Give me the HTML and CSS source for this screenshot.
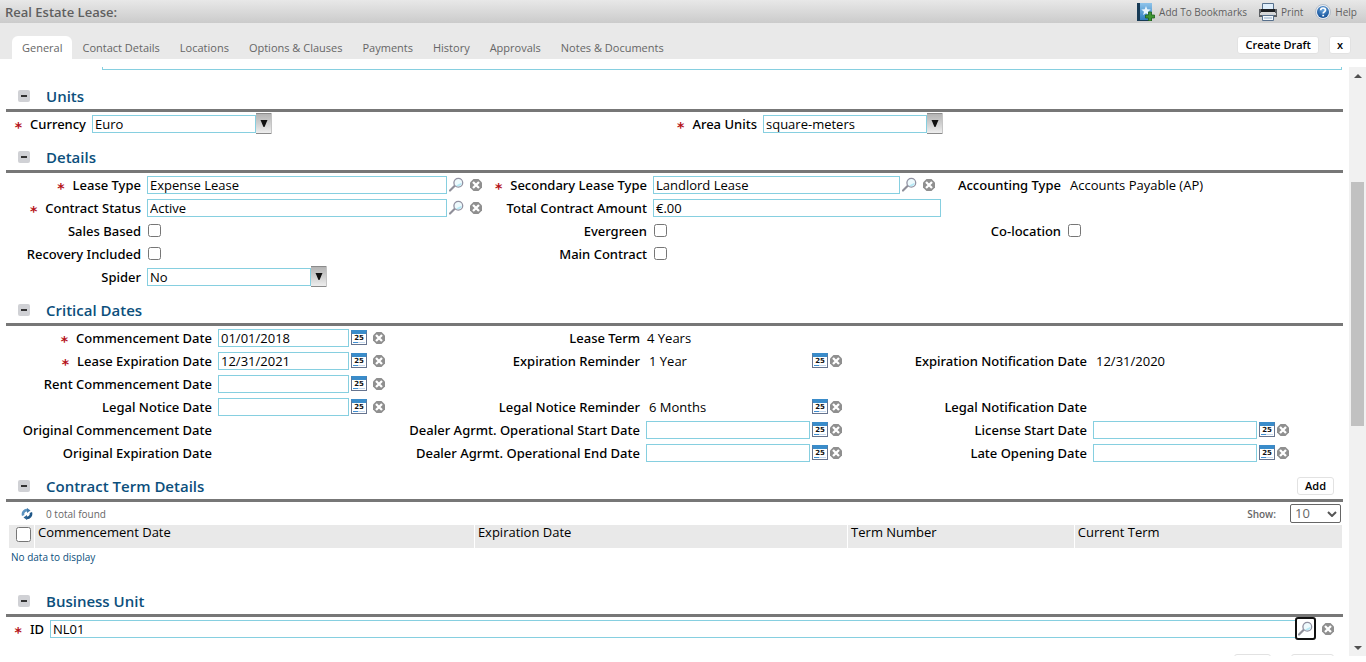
FILE: index.html
```html
<!DOCTYPE html>
<html lang="en">
<head>
<meta charset="utf-8">
<title>Real Estate Lease</title>
<link rel="stylesheet" href="styles.css">
</head>
<body>
<svg class="sprite" aria-hidden="true">
  <defs>
    <linearGradient id="g-blue" x1="0" y1="0" x2="0" y2="1"><stop offset="0" stop-color="#8fc4ea"/><stop offset="1" stop-color="#2f7fc0"/></linearGradient>
    <linearGradient id="g-arrow" x1="0" y1="0" x2="0" y2="1"><stop offset="0" stop-color="#b4b4b4"/><stop offset=".5" stop-color="#cfcfcf"/><stop offset="1" stop-color="#eeeeee"/></linearGradient>
    <radialGradient id="g-help" cx=".5" cy=".3" r=".7"><stop offset="0" stop-color="#6aa7e0"/><stop offset="1" stop-color="#0d4a94"/></radialGradient>
  </defs>
  <symbol id="i-clear" viewBox="0 0 12 12">
    <path d="M3.500 0h5L12 3.500v5L8.500 12h-5L0 8.500v-5z" fill="#8f8f8f"/>
    <path d="M3 3l6 6M9 3L3 9" stroke="#fff" stroke-width="2.300"/>
  </symbol>
  <symbol id="i-search" viewBox="0 0 15 15">
    <path d="M1 13.500l4.500-4.500" stroke="#8f8f99" stroke-width="2.200" stroke-linecap="round"/>
    <circle cx="9.300" cy="5.700" r="4.400" fill="#eefafd" stroke="#9292a2" stroke-width="1.300"/>
    <path d="M7 8.400a3.400 3.400 0 0 0 5.600-2.700" fill="#b5e8f5"/>
  </symbol>
  <symbol id="i-arrow" viewBox="0 0 16 21">
    <path d="M0 0h15.500v21H0z" fill="#8b8b8b"/>
    <path d="M0 1h15v19H0z" fill="url(#g-arrow)"/>
    <path d="M4.500 7h7l-3 7h-1z" fill="#111"/>
  </symbol>
</svg>

<header class="titlebar">
  <h1 class="titlebar-name">Real Estate Lease:</h1>
  <nav class="tools" aria-label="Page tools">
    <a class="tool" href="#bookmarks">
      <svg class="icon-tool" viewBox="0 0 18 18" aria-hidden="true"><path d="M0 0h15v18H0z" fill="#173a55"/><path d="M3 0h12v17H3z" fill="url(#g-blue)"/><path d="M9 3l1.300 3.300 3.400.2-2.700 2.200.9 3.400L9 10.200l-2.900 1.900.9-3.400-2.700-2.200 3.400-.2z" fill="#e9f5fd"/><path d="M11.500 9h3v3h3v3h-3v3h-3v-3h-3v-3h3z" fill="#3f9633" stroke="#1e5f1c" stroke-width=".8"/></svg>
      Add To Bookmarks</a>
    <a class="tool" href="#print">
      <svg class="icon-tool" viewBox="0 0 18 18" aria-hidden="true"><path d="M3.500.5h11v7h-11z" fill="#dfeefb" stroke="#57708c"/><path d="M0 6h2v4h14V6h2v8H0z" fill="#5d6064"/><path d="M2 6h14v3H2z" fill="#1d1f22"/><path d="M1 10h16v2H1z" fill="#d4d6d8"/><path d="M3.500 12.500h11v5h-11z" fill="#f4f8fc" stroke="#57708c"/><path d="M5 15h8" stroke="#8ca7c4"/></svg>
      Print</a>
    <a class="tool" href="#help">
      <svg class="icon-help" viewBox="0 0 16 16" aria-hidden="true"><circle cx="8" cy="8" r="7.500" fill="#e8edf3" stroke="#a9b4c2" stroke-width=".8"/><circle cx="8" cy="8" r="6" fill="url(#g-help)"/><path d="M5.700 6.300c0-3 4.800-3 4.800-.2 0 1.800-2.300 1.700-2.300 3.400" stroke="#fff" stroke-width="1.700" fill="none"/><path d="M7.300 10.800h1.800v1.600H7.300z" fill="#fff"/></svg>
      Help</a>
  </nav>
</header>

<div class="tabbar">
  <nav class="tabs" aria-label="Sections">
    <a class="tab tab-active" href="#general" aria-current="page">General</a>
    <a class="tab" href="#contact">Contact Details</a>
    <a class="tab" href="#locations">Locations</a>
    <a class="tab" href="#options">Options &amp; Clauses</a>
    <a class="tab" href="#payments">Payments</a>
    <a class="tab" href="#history">History</a>
    <a class="tab" href="#approvals">Approvals</a>
    <a class="tab" href="#notes">Notes &amp; Documents</a>
  </nav>
  <div class="actions">
    <button class="btn" type="button">Create Draft</button>
    <button class="btn" type="button" aria-label="Close">x</button>
  </div>
</div>

<div class="workspace">
<main class="pane">
  <div class="box-end"></div>

  <section>
    <header class="section-head">
      <button class="toggle" type="button" aria-label="Collapse Units"></button>
      <h2 class="section-title">Units</h2>
    </header>
    <div class="grid grid-units">
      <label class="label required" for="currency">Currency</label>
      <div class="field"><span class="combo"><select class="combo-select" id="currency"><option>Euro</option></select><svg class="combo-arrow" aria-hidden="true"><use href="#i-arrow"/></svg></span></div>
      <label class="label required" for="area">Area Units</label>
      <div class="field"><span class="combo"><select class="combo-select" id="area"><option>square-meters</option></select><svg class="combo-arrow" aria-hidden="true"><use href="#i-arrow"/></svg></span></div>
    </div>
  </section>

  <section>
    <header class="section-head">
      <button class="toggle" type="button" aria-label="Collapse Details"></button>
      <h2 class="section-title">Details</h2>
    </header>
    <div class="grid grid-details">
      <label class="label required" for="lease-type">Lease Type</label>
      <div class="field field-lookup"><input class="text" id="lease-type" value="Expense Lease"><button class="icon-btn" type="button" aria-label="Find"><svg class="icon-search"><use href="#i-search"/></svg></button><button class="icon-btn" type="button" aria-label="Clear"><svg class="icon-clear"><use href="#i-clear"/></svg></button></div>
      <label class="label required" for="second-type">Secondary Lease Type</label>
      <div class="field field-lookup"><input class="text" id="second-type" value="Landlord Lease"><button class="icon-btn" type="button" aria-label="Find"><svg class="icon-search"><use href="#i-search"/></svg></button><button class="icon-btn" type="button" aria-label="Clear"><svg class="icon-clear"><use href="#i-clear"/></svg></button></div>
      <span class="label">Accounting Type</span>
      <span class="value">Accounts Payable (AP)</span>

      <label class="label required" for="status">Contract Status</label>
      <div class="field field-lookup"><input class="text" id="status" value="Active"><button class="icon-btn" type="button" aria-label="Find"><svg class="icon-search"><use href="#i-search"/></svg></button><button class="icon-btn" type="button" aria-label="Clear"><svg class="icon-clear"><use href="#i-clear"/></svg></button></div>
      <label class="label" for="amount">Total Contract Amount</label>
      <div class="field"><input class="text" id="amount" value="€.00"></div>

      <label class="label new-row" for="sales">Sales Based</label>
      <div class="field"><input class="check" type="checkbox" id="sales"></div>
      <label class="label" for="evergreen">Evergreen</label>
      <div class="field"><input class="check" type="checkbox" id="evergreen"></div>
      <label class="label" for="coloc">Co-location</label>
      <div class="field"><input class="check" type="checkbox" id="coloc"></div>

      <label class="label" for="recovery">Recovery Included</label>
      <div class="field"><input class="check" type="checkbox" id="recovery"></div>
      <label class="label" for="main-contract">Main Contract</label>
      <div class="field"><input class="check" type="checkbox" id="main-contract"></div>

      <label class="label new-row" for="spider">Spider</label>
      <div class="field"><span class="combo"><select class="combo-select" id="spider"><option>No</option></select><svg class="combo-arrow" aria-hidden="true"><use href="#i-arrow"/></svg></span></div>
    </div>
  </section>

  <section>
    <header class="section-head">
      <button class="toggle" type="button" aria-label="Collapse Critical Dates"></button>
      <h2 class="section-title">Critical Dates</h2>
    </header>
    <div class="grid grid-dates">
      <label class="label required" for="commence">Commencement Date</label>
      <div class="field field-wide"><input class="text" id="commence" value="01/01/2018"><button class="cal" type="button" aria-label="Pick date">25</button><button class="icon-btn" type="button" aria-label="Clear"><svg class="icon-clear"><use href="#i-clear"/></svg></button></div>
      <span class="label">Lease Term</span>
      <span class="value value-tight">4 Years</span>

      <label class="label required new-row" for="expire">Lease Expiration Date</label>
      <div class="field field-wide"><input class="text" id="expire" value="12/31/2021"><button class="cal" type="button" aria-label="Pick date">25</button><button class="icon-btn" type="button" aria-label="Clear"><svg class="icon-clear"><use href="#i-clear"/></svg></button></div>
      <span class="label">Expiration Reminder</span>
      <div class="field"><span class="value value-fill">1 Year</span><button class="cal" type="button" aria-label="Pick date">25</button><button class="icon-btn" type="button" aria-label="Clear"><svg class="icon-clear"><use href="#i-clear"/></svg></button></div>
      <span class="label">Expiration Notification Date</span>
      <span class="value">12/31/2020</span>

      <label class="label" for="rent">Rent Commencement Date</label>
      <div class="field field-wide"><input class="text" id="rent"><button class="cal" type="button" aria-label="Pick date">25</button><button class="icon-btn" type="button" aria-label="Clear"><svg class="icon-clear"><use href="#i-clear"/></svg></button></div>

      <label class="label new-row" for="notice">Legal Notice Date</label>
      <div class="field field-wide"><input class="text" id="notice"><button class="cal" type="button" aria-label="Pick date">25</button><button class="icon-btn" type="button" aria-label="Clear"><svg class="icon-clear"><use href="#i-clear"/></svg></button></div>
      <span class="label">Legal Notice Reminder</span>
      <div class="field"><span class="value value-fill">6 Months</span><button class="cal" type="button" aria-label="Pick date">25</button><button class="icon-btn" type="button" aria-label="Clear"><svg class="icon-clear"><use href="#i-clear"/></svg></button></div>
      <span class="label">Legal Notification Date</span>

      <span class="label new-row">Original Commencement Date</span>
      <span class="value"></span>
      <label class="label" for="op-start">Dealer Agrmt. Operational Start Date</label>
      <div class="field"><input class="text" id="op-start"><button class="cal" type="button" aria-label="Pick date">25</button><button class="icon-btn" type="button" aria-label="Clear"><svg class="icon-clear"><use href="#i-clear"/></svg></button></div>
      <label class="label" for="license">License Start Date</label>
      <div class="field"><input class="text" id="license"><button class="cal" type="button" aria-label="Pick date">25</button><button class="icon-btn" type="button" aria-label="Clear"><svg class="icon-clear"><use href="#i-clear"/></svg></button></div>

      <span class="label new-row">Original Expiration Date</span>
      <span class="value"></span>
      <label class="label" for="op-end">Dealer Agrmt. Operational End Date</label>
      <div class="field"><input class="text" id="op-end"><button class="cal" type="button" aria-label="Pick date">25</button><button class="icon-btn" type="button" aria-label="Clear"><svg class="icon-clear"><use href="#i-clear"/></svg></button></div>
      <label class="label" for="late">Late Opening Date</label>
      <div class="field"><input class="text" id="late"><button class="cal" type="button" aria-label="Pick date">25</button><button class="icon-btn" type="button" aria-label="Clear"><svg class="icon-clear"><use href="#i-clear"/></svg></button></div>
    </div>
  </section>

  <section class="terms">
    <header class="section-head">
      <button class="toggle" type="button" aria-label="Collapse Contract Term Details"></button>
      <h2 class="section-title">Contract Term Details</h2>
      <button class="btn" type="button">Add</button>
    </header>
    <div class="list-bar">
      <button class="icon-btn" type="button" aria-label="Refresh"><svg class="icon-refresh" viewBox="0 0 12 12"><path d="M2.200 7.500A4 4 0 0 1 6.500 2.200" fill="none" stroke="#5b93c0" stroke-width="2.600"/><path d="M6 0l3.500 2.500L6 5z" fill="#3f78a8"/><path d="M9.800 4.500A4 4 0 0 1 5.500 9.800" fill="none" stroke="#1f5788" stroke-width="2.600"/><path d="M6 7v5L2.500 9.500z" fill="#2c6596"/></svg></button>
      <span class="count">0 total found</span>
      <label class="show" for="page-size">Show:</label>
      <span class="pager"><select class="pager-select" id="page-size"><option>10</option></select><svg class="pager-arrow" viewBox="0 0 10 6" aria-hidden="true"><path d="M1 1l4 4 4-4" fill="none" stroke="#555" stroke-width="2"/></svg></span>
    </div>
    <table class="table">
      <thead>
        <tr>
          <th class="col-check"><input class="check check-all" type="checkbox" aria-label="Select all"></th>
          <th class="col-start">Commencement Date</th>
          <th class="col-end">Expiration Date</th>
          <th class="col-number">Term Number</th>
          <th>Current Term</th>
        </tr>
      </thead>
      <tbody><tr><td colspan="5">No data to display</td></tr></tbody>
    </table>
  </section>

  <section>
    <header class="section-head">
      <button class="toggle" type="button" aria-label="Collapse Business Unit"></button>
      <h2 class="section-title">Business Unit</h2>
    </header>
    <div class="grid grid-unit">
      <label class="label required" for="unit-id">ID</label>
      <div class="field"><input class="text" id="unit-id" value="NL01"><button class="icon-btn icon-focus" type="button" aria-label="Find"><svg class="icon-search"><use href="#i-search"/></svg></button><button class="icon-btn" type="button" aria-label="Clear"><svg class="icon-clear"><use href="#i-clear"/></svg></button></div>
    </div>
    <div class="unit-actions">
      <button class="btn btn-short" type="button" aria-label="Find"></button>
      <button class="btn btn-long" type="button" aria-label="Remove"></button>
    </div>
  </section>
</main>
<div class="scroll" aria-hidden="true">
  <svg class="scroll-arrow" viewBox="0 0 17 17"><path d="M5 11h8L9 7z" fill="#505050"/></svg>
  <div class="scroll-track"><div class="scroll-thumb"></div></div>
  <svg class="scroll-arrow" viewBox="0 0 17 17"><path d="M5 7h8l-4 4z" fill="#505050"/></svg>
</div>
</div>
</body>
</html>
```
FILE: styles.css
```css
* { box-sizing: border-box; }
body {
  margin: 0;
  height: 100vh;
  display: flex;
  flex-direction: column;
  overflow: hidden;
  background: #fff;
  color: #000;
  font: 13px/16px "Trebuchet MS", "Open Sans", "Noto Sans", sans-serif;
}
button, input, select { font: inherit; color: inherit; margin: 0; }
a { color: inherit; text-decoration: none; }
.sprite { position: absolute; width: 0; height: 0; }

.titlebar {
  display: flex;
  justify-content: space-between;
  align-items: center;
  flex: none;
  height: 23px;
  padding: 0 9px 0 5px;
  background: linear-gradient(#e8e8e8, #cbcbcb);
  color: #5f5f5f;
}
.titlebar-name { margin: 0; font-size: 13px; font-weight: 600; }
.tools { display: flex; gap: 12px; }
.tool { display: flex; align-items: center; gap: 4px; font-size: 10px; }
.icon-tool { width: 18px; height: 18px; }
.icon-help { width: 16px; height: 16px; }

.tabbar {
  display: flex;
  justify-content: space-between;
  align-items: flex-end;
  flex: none;
  height: 36px;
  padding: 0 15px 0 12px;
  background: #e9e9e9;
}
.tabs { display: flex; color: #666; font-size: 11px; }
.tab { padding: 4px 10px 3px; border-radius: 6px 6px 0 0; }
.tab-active { background: #fff; }
.actions { display: flex; gap: 10px; padding-bottom: 5px; }
.btn {
  height: 18px;
  padding: 0 7px;
  border: 1px solid #e2e2e2;
  border-radius: 3px;
  background: #fff;
  font-size: 11px;
  font-weight: 600;
  line-height: 16px;
}
.btn-short { width: 37px; }
.btn-long { width: 43px; }

.workspace { display: flex; flex: 1; min-height: 0; padding: 8px 0 6px; }
.pane { flex: 1; min-width: 0; overflow: hidden; padding: 0 6px; }
.box-end { height: 3px; margin: 0 1px 13px 96px; border: 1px solid #86cfe0; border-top: 0; }
.section-head {
  display: flex;
  align-items: center;
  height: 29px;
  padding: 0 9px 0 12px;
  border-bottom: 3px solid #777;
}
.section-title { flex: 1; margin: 0 0 0 16px; color: #0c4f7c; font-size: 15px; font-weight: 600; line-height: 20px; }
.toggle { width: 12px; height: 12px; padding: 0; border: 0; border-radius: 2px; background: linear-gradient(#333, #333) center / 6px 2px no-repeat #d0d1d5; }

.grid {
  display: grid;
  column-gap: 6px;
  grid-auto-rows: 23px;
  align-items: center;
  padding: 0 0 9px;
}
.grid-units { grid-template-columns: 80px 565fr 94px 580fr; }
.grid-details { grid-template-columns: 135px 341fr 153px 288fr 114px 276fr; }
.grid-dates { grid-template-columns: 206px 167fr 249px 196fr 239px 196fr; padding-right: 54px; }
.grid-unit { grid-template-columns: 38px 1fr; padding-right: 9px; }
.new-row { grid-column-start: 1; }
.label { text-align: right; white-space: nowrap; font-family: "Trebuchet MS", "Noto Sans", sans-serif; font-size: 13px; font-weight: 500; }
.required::before { content: "*"; margin-right: 8px; color: #b51218; font: bold 14px/8px "DejaVu Sans", sans-serif; vertical-align: -3px; }
.field { display: flex; align-items: center; gap: 2px; min-width: 0; }
.field-lookup { padding-right: 6px; }
.field-lookup .icon-btn + .icon-btn, .field-wide .icon-btn { margin-left: 4px; }
.text {
  flex: 1;
  min-width: 0;
  height: 18px;
  padding: 0 2px;
  border: 1px solid #86cfe0;
  background: #fff;
}
.value { padding-left: 3px; }
.value-tight { padding-left: 1px; }
.value-fill { flex: 1; }
.check { width: 13px; height: 13px; margin-left: 1px; }
.combo { display: flex; align-items: center; width: 180px; }
.combo-select {
  flex: 1;
  height: 18px;
  padding: 0 2px;
  appearance: none;
  border: 1px solid #86cfe0;
  border-radius: 0;
  background: #fff;
  line-height: 16px;
}
.combo-arrow { width: 16px; height: 21px; }
.icon-btn { display: flex; padding: 0; border: 0; background: none; }
.icon-search { width: 15px; height: 15px; }
.icon-clear { width: 12px; height: 12px; }
.icon-refresh { width: 12px; height: 12px; }
.icon-focus { padding: 2px 1px; border: 2px solid #111; border-radius: 3px; margin: 0 4px 0 -3px; background: #fff; }
.cal {
  width: 16px;
  height: 15px;
  padding: 0;
  border: 1px solid #66748f;
  border-top: 4px solid #3a8cca;
  background: linear-gradient(90deg, #3f8fd2 5px, #c5d9ee 5px) 1px 8px / 12px 1px no-repeat #fff;
  color: #111;
  font: bold 7px/8px "DejaVu Sans", sans-serif;
  display: flex;
  justify-content: center;
}

.terms { padding-bottom: 22px; }
.list-bar { display: flex; align-items: center; height: 23px; padding: 0 2px 0 15px; color: #666; font-size: 10px; }
.count { flex: 1; margin-left: 13px; }
.show { margin-right: 14px; font-weight: 600; }
.pager { display: grid; align-items: center; }
.pager-select { grid-area: 1 / 1; width: 51px; height: 19px; padding: 0 4px; appearance: none; border: 1px solid #666; border-radius: 2px; background: #fff; font-size: 13px; line-height: 17px; }
.pager-arrow { grid-area: 1 / 1; justify-self: end; width: 10px; height: 6px; margin-right: 4px; pointer-events: none; }
.table { width: 100%; padding: 0 1px 0 3px; table-layout: fixed; border-collapse: separate; border-spacing: 0; }
.table th { height: 23px; padding: 0 3px; border-left: 1px solid #fff; background: #e9e9e9; text-align: left; vertical-align: top; font-weight: 500; line-height: 15px; }
.table .col-check { width: 25px; padding: 0; border: 0; }
.col-start { width: 33%; }
.col-end { width: 28%; }
.col-number { width: 17%; }
.table td { height: 18px; padding: 0 2px; color: #0c4f7c; font-size: 10px; }
.check-all { width: 15px; height: 15px; margin: 2px 0 0 7px; }
.unit-actions { display: flex; justify-content: flex-end; gap: 20px; padding: 5px 9px 0 0; }

.scroll { display: flex; flex-direction: column; flex: none; width: 17px; background: #f1f1f1; }
.scroll-arrow { width: 17px; height: 17px; }
.scroll-track { flex: 1; padding: 0 2px; }
.scroll-thumb { height: 44%; margin-top: 98px; background: #c1c1c1; }
```
